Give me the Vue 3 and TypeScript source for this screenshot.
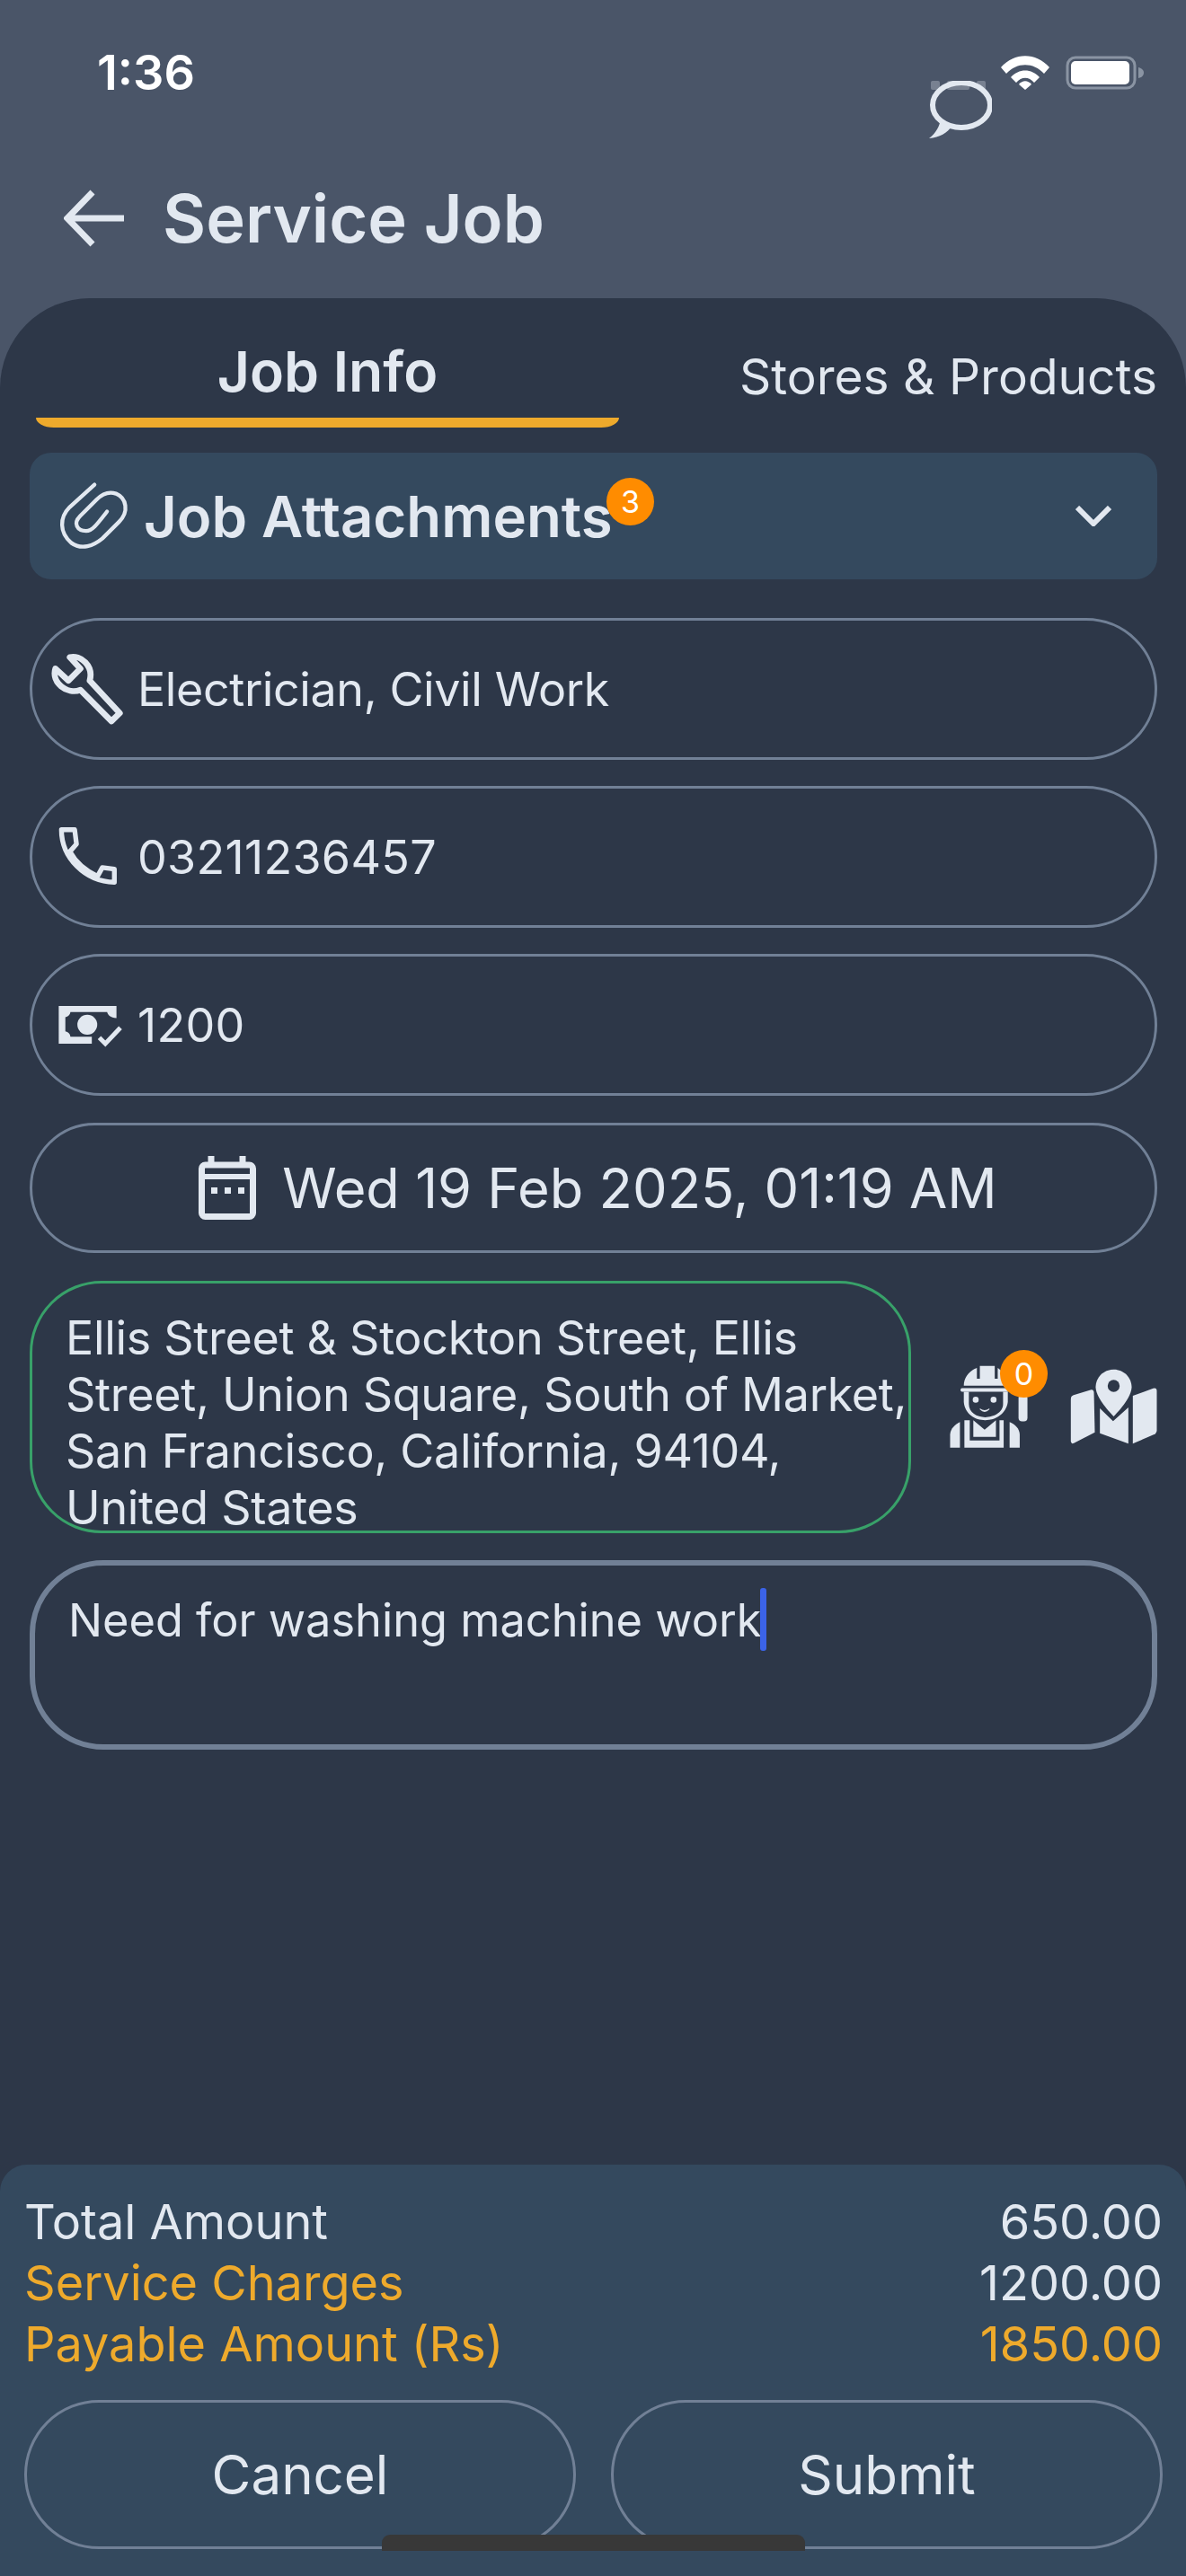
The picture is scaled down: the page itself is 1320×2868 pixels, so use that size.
<template>
  <div class="screen">
    <header class="top">
      <div class="status">
        <span class="time">1:36</span>
        <div class="status-icons">
          <svg class="wifi" viewBox="0 0 54 38">
            <path d="M0 13 C15 -4 39 -4 54 13 L48 20 C36 7 18 7 6 20 Z" />
            <path d="M11 24 C20 14 34 14 43 24 L37 30 C31 23 23 23 17 30 Z" />
            <path d="M20 32 C24 27 30 27 34 32 L27 38 Z" />
          </svg>
          <svg class="battery" viewBox="0 0 87 38">
            <rect x="2" y="2" width="75" height="34" rx="9" fill="none" stroke="#8a94a3" stroke-width="3" />
            <rect x="6" y="6" width="65" height="26" rx="5" fill="#fff" />
            <path d="M81 13 C85 14 87 16 87 19 C87 22 85 24 81 25 Z" fill="#8a94a3" />
          </svg>
        </div>
      </div>
      <div class="chat">
        <div class="chat-dots"><i></i><i class="wide"></i><i></i></div>
        <svg viewBox="0 0 70 64">
          <ellipse cx="36" cy="27" rx="32" ry="25" fill="none" stroke="#e2e8f0" stroke-width="6" />
          <path d="M0 64 C8 58 12 50 13 42 L26 50 C20 58 12 63 0 64 Z" fill="#e2e8f0" />
        </svg>
      </div>
      <div class="title-row">
        <svg class="back" viewBox="0 0 68 64">
          <path d="M32 3 L4 32 L32 61 M4 32 H67" fill="none" stroke="#e2e8f0" stroke-width="7" />
        </svg>
        <h1>Service Job</h1>
      </div>
    </header>

    <main class="panel">
      <nav class="tabs">
        <div class="tab active">
          <span>Job Info</span>
          <i class="tab-line"></i>
        </div>
        <div class="tab other">Stores &amp; Products</div>
      </nav>

      <div class="form">
        <div class="attach">
          <svg class="clip" viewBox="195 170 235 230">
            <path d="M313 180 L230 255 C195 290 195 340 235 375 C270 400 310 385 340 360 L395 305 C430 270 420 225 385 210 C355 200 335 215 320 230 L265 285 C240 310 255 335 285 335 C305 335 320 315 355 270" />
          </svg>
          <span class="attach-label">Job Attachments</span>
          <span class="badge attach-badge">3</span>
          <svg class="chevron" viewBox="0 0 40 23">
            <path d="M2 2 L20 20 L38 2" />
          </svg>
        </div>

        <div class="field">
          <svg class="field-icon" viewBox="105 80 245 245">
            <path d="M170 97 C205 88 250 125 236 175 L336 283 L308 310 L205 206 C160 223 107 180 122 135 L165 175 L205 135 Z" fill="none" stroke="#e2e8f0" stroke-width="20" stroke-linejoin="round" />
          </svg>
          <span class="text">Electrician, Civil Work</span>
        </div>
        <div class="field">
          <svg class="field-icon" viewBox="105 645 245 245">
            <path d="M142 677 H186 L192 725 L170 750 C192 790 225 815 262 832 L278 803 L318 808 V852 C220 850 142 770 142 677 Z" fill="none" stroke="#e2e8f0" stroke-width="16" stroke-linejoin="round" />
          </svg>
          <span class="digits">03211236457</span>
        </div>
        <div class="field">
          <svg class="field-icon" viewBox="105 1203 245 245">
            <path d="M133 1263 H325 V1303 C305 1303 296 1292 294 1283 H172 C170 1293 165 1298 155 1300 V1347 C165 1349 170 1354 172 1365 H243 V1388 H133 Z" fill="#e2e8f0" />
            <circle cx="228" cy="1325" r="33" fill="#e2e8f0" />
            <path d="M268 1368 L288 1388 L338 1335" fill="none" stroke="#e2e8f0" stroke-width="15" />
          </svg>
          <span class="digits">1200</span>
        </div>
        <div class="field date">
          <svg class="cal" viewBox="0 0 64 71">
            <rect x="3.5" y="10" width="57" height="57.5" rx="4" fill="none" stroke="#e2e8f0" stroke-width="7" />
            <path d="M3 23 H61" fill="none" stroke="#e2e8f0" stroke-width="6" />
            <path d="M14 0 V10 M49 0 V10" fill="none" stroke="#e2e8f0" stroke-width="7" />
            <path d="M14 35 h7 v7 h-7 Z M29 35 h7 v7 h-7 Z M44 35 h7 v7 h-7 Z" fill="#e2e8f0" />
          </svg>
          <span>Wed 19 Feb 2025, 01:19 AM</span>
        </div>

        <div class="address-row">
          <div class="address">Ellis Street &amp; Stockton Street, Ellis Street, Union Square, South of Market, San Francisco, California, 94104, United States</div>
          <div class="address-actions">
            <div class="worker">
              <svg viewBox="165 175 280 290">
                <g fill="#e2e8f0">
                  <path d="M218 250 C218 222 238 198 262 190 V226 H272 V183 H322 V226 H332 V190 C345 196 358 222 360 250 Z" />
                  <rect x="207" y="258" width="163" height="12" rx="5" />
                  <path d="M218 270 H235 V312 C235 340 262 356 290 356 C318 356 350 340 350 312 V270 H366 V305 C360 345 325 366 290 366 C255 366 222 345 218 305 Z" />
                  <circle cx="258" cy="297" r="10" />
                  <circle cx="318" cy="297" r="10" />
                  <path d="M272 326 Q288 338 304 326 L304 330 Q288 346 272 330 Z" />
                  <path d="M172 458 V415 C172 395 190 378 205 372 V458 Z" />
                  <path d="M220 366 H238 V434 H338 V366 H352 V458 H220 Z" />
                  <path d="M372 372 C390 378 406 395 406 415 V458 H372 Z" />
                  <path d="M250 366 L288 398 L326 366 V422 H250 Z" />
                  <rect x="402" y="280" width="30" height="90" rx="12" />
                </g>
                <path d="M264 366 L288 390 L312 366" fill="none" stroke="#2d3748" stroke-width="7" />
              </svg>
              <span class="badge worker-badge">0</span>
            </div>
            <svg class="map" viewBox="570 190 296 258">
              <g fill="#e2e8f0">
                <path d="M575 294 Q575 284 584 281 L643 263 Q650 262 652 270 L655 405 L585 441 Q575 446 575 434 Z" />
                <path d="M672 325 L716 368 L767 322 V443 L672 408 Z" />
                <path d="M782 283 L850 258 Q862 255 862 267 V398 Q862 408 853 412 L782 443 Z" />
              </g>
              <path d="M718 195 C752 195 778 222 778 254 C778 285 740 330 718 352 C696 330 658 285 658 254 C658 222 684 195 718 195 Z" fill="#e2e8f0" />
              <circle cx="718" cy="250" r="20" fill="#2d3748" />
            </svg>
          </div>
        </div>

        <div class="notes"><span>Need for washing machine work</span><i class="caret"></i></div>
      </div>

      <footer class="summary">
        <div class="line"><span>Total Amount</span><span>650.00</span></div>
        <div class="line"><span class="amber">Service Charges</span><span>1200.00</span></div>
        <div class="line amber"><span>Payable Amount (Rs)</span><span>1850.00</span></div>
        <div class="buttons">
          <button type="button">Cancel</button>
          <button type="button">Submit</button>
        </div>
      </footer>
    </main>
    <i class="home-bar"></i>
  </div>
</template>

<script setup lang="ts">
</script>

<style>
html, body {
  margin: 0;
  background: #4a5568;
}
</style>

<style scoped>
.screen {
  position: relative;
  width: 1320px;
  height: 2868px;
  overflow: hidden;
  display: flex;
  flex-direction: column;
  background: #4a5568;
  color: #e2e8f0;
  font-family: Inter, "Liberation Sans", sans-serif;
}
.top {
  position: relative;
  height: 332px;
  flex: none;
}
.status {
  display: flex;
  justify-content: space-between;
  padding: 62px 47px 0 108px;
}
.time {
  font-size: 54px;
  line-height: 38px;
  font-weight: 600;
  color: #fff;
}
.status-icons {
  display: flex;
  gap: 18px;
}
.wifi {
  width: 54px;
  height: 38px;
  fill: #fff;
}
.battery {
  width: 87px;
  height: 38px;
}
.chat {
  position: absolute;
  left: 1034px;
  top: 90px;
  width: 70px;
}
.chat svg {
  display: block;
  width: 70px;
  height: 64px;
}
.chat-dots {
  position: absolute;
  top: 0;
  left: 2px;
  display: flex;
  gap: 8px;
  opacity: 0.3;
}
.chat-dots i {
  width: 10px;
  height: 10px;
  border-radius: 2px;
  background: #e2e8f0;
}
.chat-dots i.wide {
  width: 25px;
}
.title-row {
  display: flex;
  align-items: center;
  gap: 42px;
  padding: 103px 0 0 71px;
}
.back {
  width: 68px;
  height: 64px;
  flex: none;
}
h1 {
  margin: 0;
  font-size: 74px;
  line-height: 80px;
  font-weight: 600;
  color: #e2e8f0;
}
.panel {
  flex: 1;
  display: flex;
  flex-direction: column;
  background: #2d3748;
  border-radius: 100px 100px 0 0;
}
.tabs {
  display: flex;
  height: 144px;
  flex: none;
}
.tab {
  display: flex;
  flex-direction: column;
  align-items: center;
}
.tab.active {
  width: 649px;
  margin-left: 40px;
  font-size: 62.5px;
  font-weight: 600;
  line-height: 70px;
  padding-top: 46px;
  box-sizing: border-box;
  height: 144px;
}
.tab-line {
  margin-top: 17px;
  width: 100%;
  height: 11px;
  background: #eeaa2c;
  border-radius: 0 0 20px 20px / 0 0 11px 11px;
}
.tab.other {
  margin-left: auto;
  margin-right: 32px;
  padding-top: 52px;
  font-size: 55px;
  line-height: 70px;
}
.form {
  display: flex;
  flex-direction: column;
  padding: 28px 32px 0 33px;
}
.attach {
  position: relative;
  display: flex;
  align-items: center;
  height: 141px;
  background: #34495e;
  border-radius: 24px;
  padding: 0 51px 0 33px;
}
.clip {
  width: 78px;
  height: 77px;
  fill: none;
  stroke: #e2e8f0;
  stroke-width: 13;
  stroke-linecap: round;
}
.attach-label {
  margin-left: 16px;
  font-size: 63.5px;
  font-weight: 600;
  line-height: 70px;
}
.badge {
  position: absolute;
  display: flex;
  align-items: center;
  justify-content: center;
  width: 53px;
  height: 53px;
  border-radius: 50%;
  background: #ff8c00;
  color: #fff;
  font-size: 34px;
}
.attach-badge {
  left: 642px;
  top: 28px;
}
.chevron {
  margin-left: auto;
  width: 40px;
  height: 23px;
  fill: none;
  stroke: #e2e8f0;
  stroke-width: 6;
}
.field {
  display: flex;
  align-items: center;
  height: 158px;
  margin-top: 43px;
  box-sizing: border-box;
  border: 3px solid #718096;
  border-radius: 79px;
  padding-left: 20px;
  font-size: 52px;
}
.field + .field {
  margin-top: 29px;
}
.text {
  letter-spacing: -0.4px;
}
.digits {
  letter-spacing: 0.3px;
}
.field-icon {
  width: 82px;
  height: 82px;
  flex: none;
  margin-right: 15px;
}
.field.date {
  height: 145px;
  margin-top: 30px;
  padding-left: 10px;
  justify-content: center;
  font-size: 61.3px;
}
.cal {
  width: 64px;
  height: 71px;
  margin-right: 29px;
}
.address-row {
  display: flex;
  margin-top: 31px;
}
.address {
  width: 981px;
  height: 281px;
  box-sizing: border-box;
  border: 3px solid #38a169;
  border-radius: 80px;
  padding: 29px 0 0 37px;
  font-size: 52px;
  line-height: 63px;
  letter-spacing: -0.3px;
}
.address-actions {
  flex: 1;
  position: relative;
}
.worker {
  position: absolute;
  left: 41px;
  top: 92px;
  width: 93px;
  height: 96px;
}
.worker svg {
  width: 93px;
  height: 96px;
  display: block;
}
.worker-badge {
  left: 58px;
  top: -15px;
}
.map {
  position: absolute;
  left: 176px;
  top: 97px;
  width: 99px;
  height: 86px;
}
.notes {
  display: flex;
  margin-top: 30px;
  height: 211px;
  box-sizing: border-box;
  border: 6px solid #718096;
  border-radius: 82px;
  padding: 31px 0 0 37px;
  font-size: 50.5px;
  line-height: 60px;
}
.caret {
  width: 7px;
  height: 70px;
  margin: -6px 0 0 -1px;
  border-radius: 3px;
  background: #3b63e8;
}
.summary {
  margin-top: auto;
  height: 458px;
  box-sizing: border-box;
  background: #34495e;
  border-radius: 30px 30px 0 0;
  padding: 30px 26px 0 27px;
  font-size: 54px;
  line-height: 68px;
}
.line {
  display: flex;
  justify-content: space-between;
}
.amber {
  color: #eeaa2c;
}
.buttons {
  display: flex;
  gap: 39px;
  margin-top: 28px;
}
button {
  flex: 1;
  height: 166px;
  border: 3px solid #718096;
  border-radius: 83px;
  background: transparent;
  color: #e2e8f0;
  font: inherit;
  font-size: 60px;
}
.home-bar {
  position: absolute;
  left: 425px;
  top: 2822px;
  width: 471px;
  height: 18px;
  border-radius: 9px 9px 0 0;
  background: #383838;
}
</style>
